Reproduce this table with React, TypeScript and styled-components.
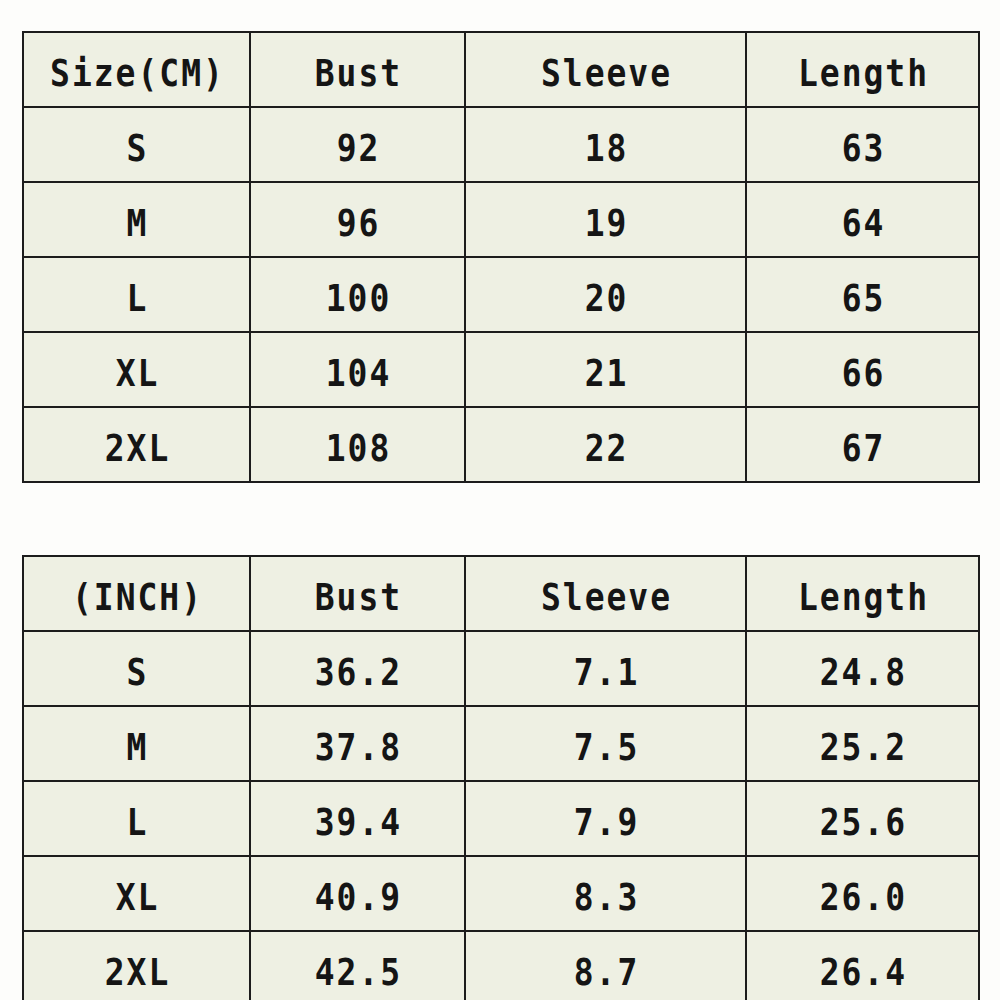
import styled, { createGlobalStyle } from "styled-components";

const GlobalStyle = createGlobalStyle`
  html, body {
    margin: 0;
    padding: 0;
    background: #fdfdfb;
  }
`;

const Page = styled.div`
  width: 1000px;
  height: 1000px;
  overflow: hidden;
  padding: 31px 0 0 22px;
  box-sizing: border-box;
  display: flex;
  flex-direction: column;
  gap: 72px;
`;

const Table = styled.table`
  width: 956px;
  border-collapse: collapse;
  table-layout: fixed;
  background: #eef0e3;
`;

const Cell = styled.td`
  border: 2px solid #1c1c1c;
  height: 73px;
  padding: 0;
  text-align: center;
  vertical-align: middle;
  font-family: "DejaVu Sans Mono", "Liberation Mono", monospace;
  font-weight: bold;
  font-size: 33px;
  color: #151515;
`;

const Glyphs = styled.span`
  display: inline-block;
  transform: scaleY(1.12);
  padding-top: 6px;
  padding-left: 2px;
  letter-spacing: 2px;
`;

const widths = [227, 215, 281, 233];

type Row = string[];

const cmRows: Row[] = [
  ["Size(CM)", "Bust", "Sleeve", "Length"],
  ["S", "92", "18", "63"],
  ["M", "96", "19", "64"],
  ["L", "100", "20", "65"],
  ["XL", "104", "21", "66"],
  ["2XL", "108", "22", "67"],
];

const inchRows: Row[] = [
  ["(INCH)", "Bust", "Sleeve", "Length"],
  ["S", "36.2", "7.1", "24.8"],
  ["M", "37.8", "7.5", "25.2"],
  ["L", "39.4", "7.9", "25.6"],
  ["XL", "40.9", "8.3", "26.0"],
  ["2XL", "42.5", "8.7", "26.4"],
];

const SizeTable = ({ rows }: { rows: Row[] }) => (
  <Table>
    <colgroup>
      {widths.map((w, i) => (
        <col key={i} style={{ width: w }} />
      ))}
    </colgroup>
    <tbody>
      {rows.map((row, r) => (
        <tr key={r}>
          {row.map((text, c) => (
            <Cell key={c}>
              <Glyphs>{text}</Glyphs>
            </Cell>
          ))}
        </tr>
      ))}
    </tbody>
  </Table>
);

export default function App() {
  return (
    <>
      <GlobalStyle />
      <Page>
        <SizeTable rows={cmRows} />
        <SizeTable rows={inchRows} />
      </Page>
    </>
  );
}
